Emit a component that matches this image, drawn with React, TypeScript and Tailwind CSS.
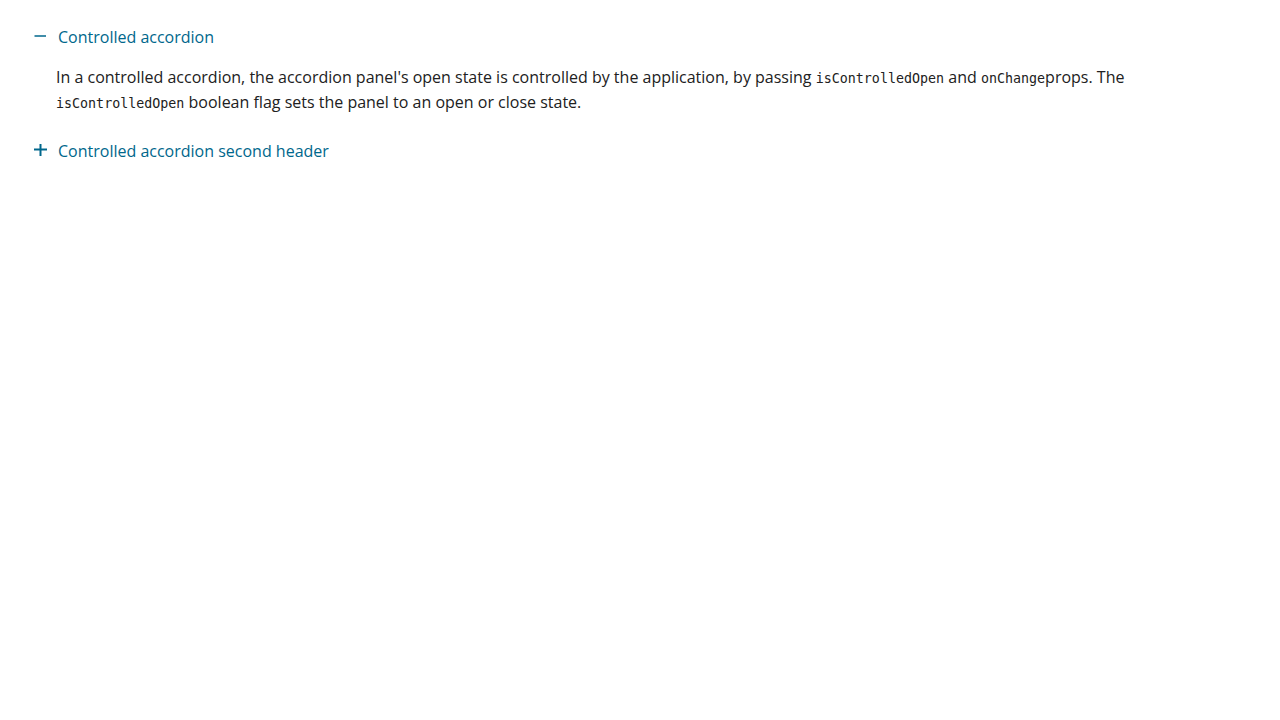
import { useState } from "react";

const items = [
  {
    id: "first",
    title: "Controlled accordion",
  },
  {
    id: "second",
    title: "Controlled accordion second header",
  },
];

function Code({ children }: { children: string }) {
  return (
    <code className="font-['DejaVu_Sans_Mono',monospace] text-[13.33px] leading-none">
      {children}
    </code>
  );
}

function Icon({ open }: { open: boolean }) {
  return (
    <svg width="14" height="16" viewBox="0 0 14 16" className="shrink-0">
      {open ? (
        <path d="M0.5 6h11.5" stroke="currentColor" strokeWidth="1.5" />
      ) : (
        <>
          <path d="M0 5.5h13" stroke="currentColor" strokeWidth="2" />
          <path d="M6.5 -1v13" stroke="currentColor" strokeWidth="2" />
        </>
      )}
    </svg>
  );
}

export default function App() {
  const [open, setOpen] = useState<string | null>("first");

  return (
    <div className="min-h-screen bg-white px-[34px] pt-[25px] font-['Open_Sans',sans-serif] text-[16px] text-[#212121]">
      {items.map((item) => {
        const isOpen = open === item.id;
        return (
          <div key={item.id} className="mb-[10px]">
            <button
              onClick={() => setOpen(isOpen ? null : item.id)}
              className="flex h-[25px] items-center gap-[10px] text-[#00678c]"
            >
              <Icon open={isOpen} />
              <span className="leading-[25px]">{item.title}</span>
            </button>
            {isOpen && (
              <div className="pb-[14px] pl-[22px] pt-[15px] leading-[25px]">
                In a controlled accordion, the accordion panel's open state is controlled by the
                application, by passing <Code>isControlledOpen</Code> and <Code>onChange</Code>props.
                The <Code>isControlledOpen</Code> boolean flag sets the panel to an open or close state.
              </div>
            )}
          </div>
        );
      })}
    </div>
  );
}
